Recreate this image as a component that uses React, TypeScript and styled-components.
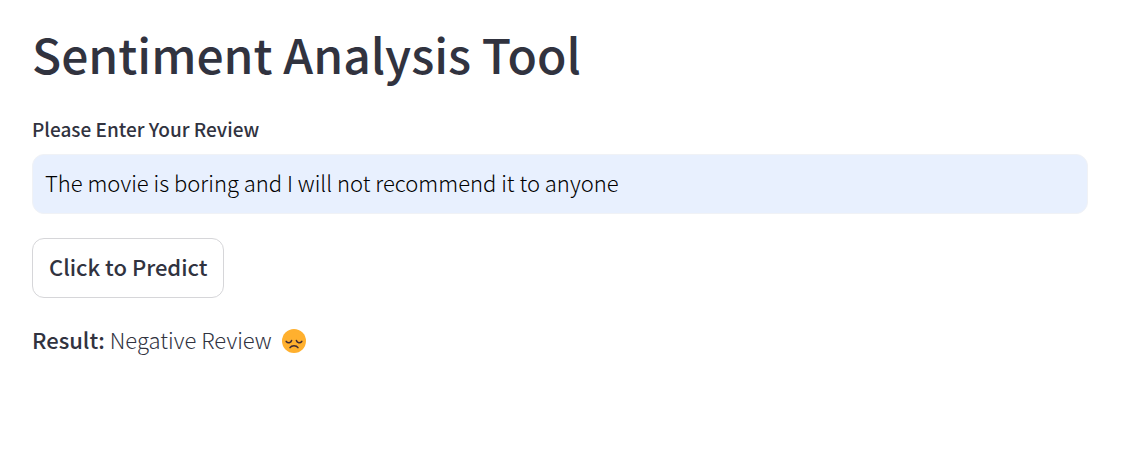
import React, { useState } from "react";
import styled, { createGlobalStyle } from "styled-components";

const GlobalStyle = createGlobalStyle`
  *, *::before, *::after { box-sizing: border-box; }
  body {
    margin: 0;
    background: #ffffff;
    color: #31333f;
    font-family: "Noto Sans CJK SC", "Source Sans Pro", sans-serif;
    font-size: 22px;
    font-weight: 300;
    line-height: 36px;
  }
`;

const Page = styled.main`
  padding: 21px 33px 32px 32px;
`;

const Title = styled.h1`
  margin: 0 0 30px;
  font-size: 48px;
  font-weight: 500;
  line-height: 64px;
`;

const Form = styled.form`
  display: flex;
  flex-direction: column;
  align-items: flex-start;
`;

const Label = styled.label`
  margin-bottom: 11px;
  font-size: 19px;
  font-weight: 500;
  line-height: 28px;
`;

const ReviewInput = styled.input`
  width: 100%;
  height: 60px;
  margin-bottom: 24px;
  padding: 0 12px 4px;
  border: 1px solid #f0f2f6;
  border-radius: 12px;
  outline: none;
  background: #e8f0fe;
  color: #000000;
  font: inherit;
`;

const PredictButton = styled.button`
  height: 60px;
  margin-bottom: 23px;
  padding: 0 16px 4px;
  border: 1px solid #d6d6d9;
  border-radius: 12px;
  background: #ffffff;
  color: inherit;
  font: inherit;
  font-weight: 500;
  cursor: pointer;
`;

const Result = styled.p`
  display: flex;
  align-items: center;
  margin: 0;
`;

const ResultText = styled.span`
  white-space: pre;
`;

const ResultLabel = styled.strong`
  font-weight: 500;
`;

const Face = styled.svg`
  width: 26px;
  height: 26px;
  margin: 4px 0 0 9px;
`;

function SadFace() {
  return (
    <Face viewBox="0 0 26 26" role="img" aria-label="Disappointed face">
      <circle cx="13" cy="13" r="12" fill="#ffb02e" />
      <g fill="none" stroke="#402a32" strokeLinecap="round" strokeWidth="1.5">
        <path d="M5.2 13.4c1.7 2 4.8 1.6 5.4-.9" />
        <path d="M15.4 12.5c.6 2.5 3.7 2.9 5.4.9" />
        <path d="M9 19.7c1.6-2.6 6.4-2.6 8 0" />
      </g>
    </Face>
  );
}

export default function App() {
  const [review, setReview] = useState(
    "The movie is boring and I will not recommend it to anyone"
  );
  return (
    <>
      <GlobalStyle />
      <Page>
        <Title>Sentiment Analysis Tool</Title>
        <Form onSubmit={(event) => event.preventDefault()}>
          <Label htmlFor="review">Please Enter Your Review</Label>
          <ReviewInput
            id="review"
            type="text"
            value={review}
            onChange={(event) => setReview(event.target.value)}
          />
          <PredictButton type="submit">Click to Predict</PredictButton>
        </Form>
        <Result>
          <ResultText>
            <ResultLabel>Result:</ResultLabel> Negative Review
          </ResultText>
          <SadFace />
        </Result>
      </Page>
    </>
  );
}
